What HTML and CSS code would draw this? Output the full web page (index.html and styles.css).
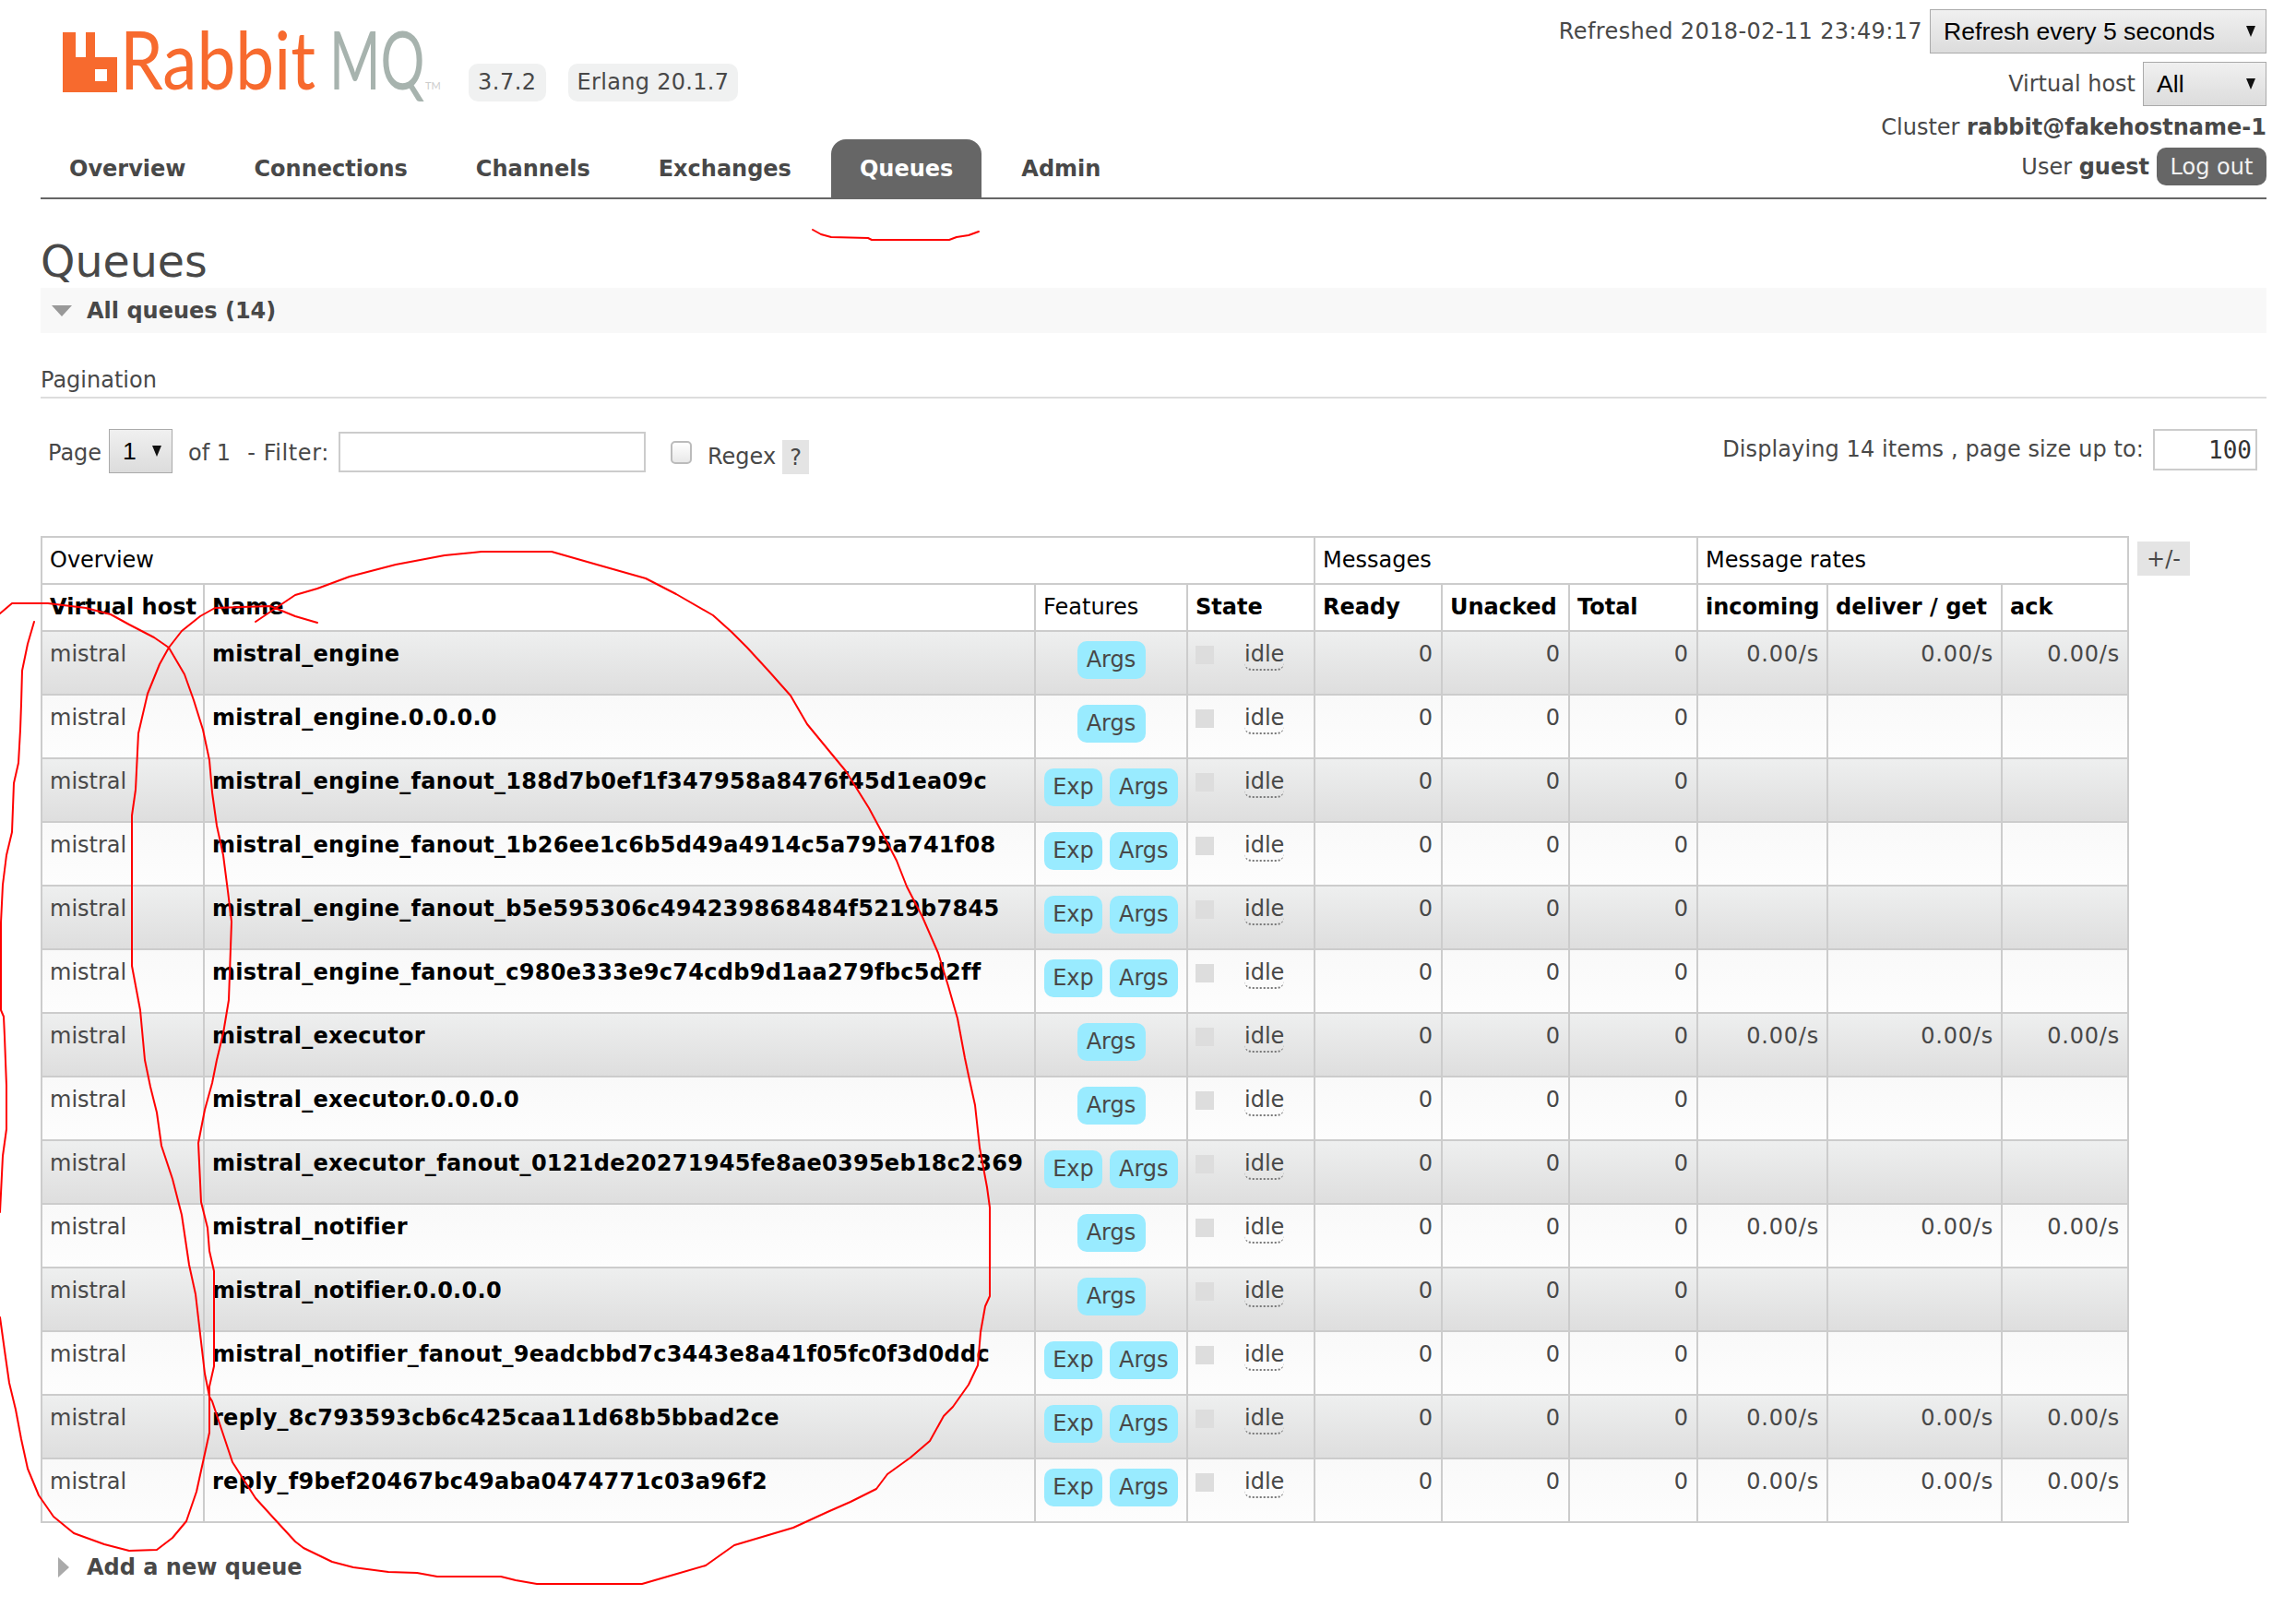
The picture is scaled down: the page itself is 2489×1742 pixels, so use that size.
FILE: index.html
```html
<!DOCTYPE html>
<html lang="en">
<head>
<meta charset="utf-8">
<title>RabbitMQ Management</title>
<link rel="stylesheet" href="styles.css">
</head>
<body>
<div class="page">
  <header class="header">
    <div class="header-left">
      <div class="brand">
        <svg class="logo" viewBox="0 0 420 75" width="420" height="75" aria-label="RabbitMQ">
          <path d="M0 5H14V32H25V5H35V32H59V70H0ZM35 45V58H48V45Z" fill="#f76a2e" fill-rule="evenodd"/>
          <text class="logo-word logo-orange" transform="translate(62 67) scale(.85 1)">Rabbit</text>
          <text class="logo-word logo-grey" transform="translate(289 67) scale(.68 1)">MQ</text>
          <text class="logo-tm" x="393" y="67">TM</text>
        </svg>
        <span class="version version-a">3.7.2</span>
        <span class="version version-b">Erlang 20.1.7</span>
      </div>
      <nav class="nav">
        <a class="tab">Overview</a>
        <a class="tab">Connections</a>
        <a class="tab">Channels</a>
        <a class="tab">Exchanges</a>
        <a class="tab tab-active">Queues</a>
        <a class="tab">Admin</a>
      </nav>
    </div>
    <div class="header-right">
      <div class="meta-row meta-refresh"><span class="digits">Refreshed 2018-02-11 23:49:17</span>
        <span class="select-wrap"><select class="select select-refresh"><option>Refresh every 5 seconds</option></select></span>
      </div>
      <div class="meta-row meta-vhost">Virtual host
        <span class="select-wrap"><select class="select select-vhost"><option>All</option></select></span>
      </div>
      <div class="meta-row meta-cluster"><span>Cluster <b class="strong">rabbit@fakehostname-1</b></span></div>
      <div class="meta-row meta-user"><span>User <b class="strong">guest</b></span> <button class="logout">Log out</button></div>
    </div>
  </header>

  <h1 class="title">Queues</h1>
  <div class="section-head"><span class="tri-down"></span>All queues (14)</div>

  <h3 class="pagination-label">Pagination</h3>
  <div class="filter-row">
    <div class="filter-left">
      <span class="lbl-page">Page</span>
      <span class="select-wrap"><select class="select select-page"><option>1</option></select></span>
      <span class="lbl-of">of 1</span>
      <span class="lbl-filter">- Filter:</span>
      <input class="input-filter" type="text">
      <input class="check" type="checkbox">
      <span class="lbl-regex">Regex</span>
      <span class="help">?</span>
    </div>
    <div class="filter-right">
      <span class="lbl-display">Displaying 14 items , page size up to:</span>
      <input class="input-size" type="text" value="100">
    </div>
  </div>

  <div class="table-row">
    <table class="queues">
      <colgroup>
        <col class="c-vhost"><col class="c-name"><col class="c-feat"><col class="c-state">
        <col class="c-msg"><col class="c-msg"><col class="c-total">
        <col class="c-in"><col class="c-del"><col class="c-ack">
      </colgroup>
      <thead>
        <tr class="head-a">
          <th colspan="4">Overview</th>
          <th colspan="3">Messages</th>
          <th colspan="3">Message rates</th>
        </tr>
        <tr class="head-b">
          <th class="b">Virtual host</th>
          <th class="b">Name</th>
          <th>Features</th>
          <th class="b">State</th>
          <th class="b">Ready</th>
          <th class="b">Unacked</th>
          <th class="b">Total</th>
          <th class="b">incoming</th>
          <th class="b">deliver / get</th>
          <th class="b">ack</th>
        </tr>
      </thead>
      <tbody>
        <tr class="alt1"><td>mistral</td><td class="qname">mistral_engine</td><td class="feat"><span class="tag">Args</span></td><td><span class="status"></span><span class="idle">idle</span></td><td class="num">0</td><td class="num">0</td><td class="num">0</td><td class="num rate">0.00/s</td><td class="num rate">0.00/s</td><td class="num rate">0.00/s</td></tr>
        <tr class="alt2"><td>mistral</td><td class="qname">mistral_engine.0.0.0.0</td><td class="feat"><span class="tag">Args</span></td><td><span class="status"></span><span class="idle">idle</span></td><td class="num">0</td><td class="num">0</td><td class="num">0</td><td></td><td></td><td></td></tr>
        <tr class="alt1"><td>mistral</td><td class="qname">mistral_engine_fanout_188d7b0ef1f347958a8476f45d1ea09c</td><td class="feat"><span class="tag">Exp</span><span class="tag">Args</span></td><td><span class="status"></span><span class="idle">idle</span></td><td class="num">0</td><td class="num">0</td><td class="num">0</td><td></td><td></td><td></td></tr>
        <tr class="alt2"><td>mistral</td><td class="qname">mistral_engine_fanout_1b26ee1c6b5d49a4914c5a795a741f08</td><td class="feat"><span class="tag">Exp</span><span class="tag">Args</span></td><td><span class="status"></span><span class="idle">idle</span></td><td class="num">0</td><td class="num">0</td><td class="num">0</td><td></td><td></td><td></td></tr>
        <tr class="alt1"><td>mistral</td><td class="qname">mistral_engine_fanout_b5e595306c494239868484f5219b7845</td><td class="feat"><span class="tag">Exp</span><span class="tag">Args</span></td><td><span class="status"></span><span class="idle">idle</span></td><td class="num">0</td><td class="num">0</td><td class="num">0</td><td></td><td></td><td></td></tr>
        <tr class="alt2"><td>mistral</td><td class="qname">mistral_engine_fanout_c980e333e9c74cdb9d1aa279fbc5d2ff</td><td class="feat"><span class="tag">Exp</span><span class="tag">Args</span></td><td><span class="status"></span><span class="idle">idle</span></td><td class="num">0</td><td class="num">0</td><td class="num">0</td><td></td><td></td><td></td></tr>
        <tr class="alt1"><td>mistral</td><td class="qname">mistral_executor</td><td class="feat"><span class="tag">Args</span></td><td><span class="status"></span><span class="idle">idle</span></td><td class="num">0</td><td class="num">0</td><td class="num">0</td><td class="num rate">0.00/s</td><td class="num rate">0.00/s</td><td class="num rate">0.00/s</td></tr>
        <tr class="alt2"><td>mistral</td><td class="qname">mistral_executor.0.0.0.0</td><td class="feat"><span class="tag">Args</span></td><td><span class="status"></span><span class="idle">idle</span></td><td class="num">0</td><td class="num">0</td><td class="num">0</td><td></td><td></td><td></td></tr>
        <tr class="alt1"><td>mistral</td><td class="qname">mistral_executor_fanout_0121de20271945fe8ae0395eb18c2369</td><td class="feat"><span class="tag">Exp</span><span class="tag">Args</span></td><td><span class="status"></span><span class="idle">idle</span></td><td class="num">0</td><td class="num">0</td><td class="num">0</td><td></td><td></td><td></td></tr>
        <tr class="alt2"><td>mistral</td><td class="qname">mistral_notifier</td><td class="feat"><span class="tag">Args</span></td><td><span class="status"></span><span class="idle">idle</span></td><td class="num">0</td><td class="num">0</td><td class="num">0</td><td class="num rate">0.00/s</td><td class="num rate">0.00/s</td><td class="num rate">0.00/s</td></tr>
        <tr class="alt1"><td>mistral</td><td class="qname">mistral_notifier.0.0.0.0</td><td class="feat"><span class="tag">Args</span></td><td><span class="status"></span><span class="idle">idle</span></td><td class="num">0</td><td class="num">0</td><td class="num">0</td><td></td><td></td><td></td></tr>
        <tr class="alt2"><td>mistral</td><td class="qname">mistral_notifier_fanout_9eadcbbd7c3443e8a41f05fc0f3d0ddc</td><td class="feat"><span class="tag">Exp</span><span class="tag">Args</span></td><td><span class="status"></span><span class="idle">idle</span></td><td class="num">0</td><td class="num">0</td><td class="num">0</td><td></td><td></td><td></td></tr>
        <tr class="alt1"><td>mistral</td><td class="qname">reply_8c793593cb6c425caa11d68b5bbad2ce</td><td class="feat"><span class="tag">Exp</span><span class="tag">Args</span></td><td><span class="status"></span><span class="idle">idle</span></td><td class="num">0</td><td class="num">0</td><td class="num">0</td><td class="num rate">0.00/s</td><td class="num rate">0.00/s</td><td class="num rate">0.00/s</td></tr>
        <tr class="alt2"><td>mistral</td><td class="qname">reply_f9bef20467bc49aba0474771c03a96f2</td><td class="feat"><span class="tag">Exp</span><span class="tag">Args</span></td><td><span class="status"></span><span class="idle">idle</span></td><td class="num">0</td><td class="num">0</td><td class="num">0</td><td class="num rate">0.00/s</td><td class="num rate">0.00/s</td><td class="num rate">0.00/s</td></tr>
      </tbody>
    </table>
    <span class="toggle">+/-</span>
  </div>

  <div class="section-foot"><span class="tri-right"></span>Add a new queue</div>
</div>

<svg class="ink" viewBox="0 0 2489 1742" width="2489" height="1742" aria-hidden="true">
  <polyline points="881,249 890,254 901,257 941,258 945,260 973,260 1029,260 1037,257 1050,255 1061,251"/>
  <polyline points="37,674 30,698 24,727 23,763 22,791 20,827 15,849 13,902 7,927 3,959 1,1000 1,1095 4,1102 5,1124 7,1177 7,1224 3,1253 0,1314"/>
  <polyline points="0,1428 5,1464 10,1499 17,1528 23,1560 30,1592 42,1621 58,1644 80,1662 113,1674 140,1681 170,1680 187,1667 202,1649 213,1617 220,1585 227,1553 227,1503 232,1481 232,1378 227,1356 225,1331 218,1303 215,1239 222,1203 230,1174 235,1149 242,1120 248,1084 251,999 247,966 242,927 235,895 230,859 227,824 220,791 210,759 200,731 183,702 167,691 140,677 120,666 93,659 52,654 13,654 0,665"/>
  <polyline points="277,674 320,645 344,638 379,625 429,612 482,602 522,598 598,598 647,612 700,627 733,644 773,667 793,685 810,702 833,727 857,754 875,785 898,813 917,836 942,876 957,904 972,933 983,961 1000,994 1017,1033 1028,1069 1038,1104 1046,1147 1050,1166 1057,1198 1062,1244 1070,1287 1073,1309 1073,1405 1068,1416 1063,1444 1060,1480 1050,1501 1033,1525 1023,1535 1008,1562 987,1580 962,1598 950,1614 922,1628 897,1639 860,1656 796,1675 765,1697 727,1708 696,1717 582,1717 559,1713 543,1709 474,1709 452,1705 421,1704 383,1699 360,1693 329,1678 320,1671 297,1646 277,1624 252,1585 240,1549 230,1519 227,1514 222,1489 217,1446 212,1403 205,1371 197,1317 187,1278 175,1242 170,1206 163,1178 157,1149 152,1095 143,1047 143,884 147,856 150,795 160,752 173,720 183,702 197,684 217,668 233,659 293,657 320,668 344,675"/>
</svg>
</body>
</html>
```

FILE: styles.css
```css
* { box-sizing: border-box; }
html, body { margin: 0; padding: 0; background: #fff; }
body {
  position: relative;
  width: 2489px;
  height: 1742px;
  overflow: hidden;
  font-family: "DejaVu Sans", Verdana, sans-serif;
  font-size: 24px;
  line-height: 30px;
  color: #484848;
}
.page { padding: 0 32px 0 44px; }

/* header */
.header {
  display: flex;
  justify-content: space-between;
  height: 216px;
  border-bottom: 2px solid #666;
}
.header-left { display: flex; flex-direction: column; justify-content: space-between; }
.brand { display: flex; align-items: flex-start; padding: 30px 0 0 24px; }
.logo { flex: none; margin-right: 20px; overflow: visible; }
.logo-word { font-family: Lato, sans-serif; font-weight: 400; font-size: 88px; }
.logo-orange { fill: #f76a2e; }
.logo-grey { fill: #a7b3ae; }
.logo-tm { font-family: Lato, sans-serif; font-size: 11px; fill: #ccc; }
.version {
  margin-top: 39px;
  height: 41px;
  line-height: 41px;
  padding: 0 10px;
  background: #f0f1f1;
  border-radius: 10px;
}
.version-a { letter-spacing: .5px; }
.version-b { margin-left: 24px; letter-spacing: .3px; }
.nav { display: flex; }
.tab {
  height: 63px;
  line-height: 65px;
  padding: 0 31px;
  margin-right: 12px;
  font-weight: bold;
  border-radius: 16px 16px 0 0;
  color: #484848;
}
.tab-active { background: #666; color: #fff; }
.header-right { display: flex; flex-direction: column; align-items: flex-end; padding-top: 10px; }
.meta-row { display: flex; align-items: center; gap: 8px; }
.digits { letter-spacing: .38px; }
.meta-vhost { margin-top: 9px; }
.meta-cluster { margin-top: 8px; height: 30px; }
.meta-user { margin-top: 7px; }
.strong { font-weight: bold; }
.logout {
  height: 41px;
  width: 119px;
  padding: 0;
  border: 0;
  border-radius: 10px;
  background: #666;
  color: #f2f2f2;
  font: 24px "DejaVu Sans", sans-serif;
}

/* selects */
.select-wrap { position: relative; display: inline-block; }
.select-wrap::after {
  content: "";
  position: absolute;
  right: 12px;
  top: 18px;
  border-left: 5px solid transparent;
  border-right: 5px solid transparent;
  border-top: 12px solid #111;
  pointer-events: none;
}
.select {
  display: block;
  appearance: none;
  -webkit-appearance: none;
  height: 48px;
  padding: 0 14px;
  border: 1px solid #aaa;
  border-radius: 0;
  background: linear-gradient(#f0f0f0, #dcdcdc);
  font: 26.6px "Liberation Sans", Arial, sans-serif;
  color: #000;
}
.select-refresh { width: 365px; }
.select-vhost { width: 134px; }
.select-page { width: 69px; }

/* title */
.title {
  margin: 0;
  height: 96px;
  padding-top: 38px;
  font-size: 47.5px;
  line-height: 60px;
  font-weight: normal;
  color: #484848;
}
.section-head {
  display: flex;
  align-items: center;
  height: 49px;
  background: #f8f8f8;
  font-weight: bold;
  padding-left: 12px;
}
.tri-down {
  width: 0; height: 0;
  margin-right: 16px;
  border-left: 11px solid transparent;
  border-right: 11px solid transparent;
  border-top: 12px solid #999;
}
.pagination-label {
  margin: 36px 0 0;
  height: 35px;
  font-size: 24px;
  font-weight: normal;
  line-height: 30px;
  border-bottom: 2px solid #ddd;
}

/* filter row */
.filter-row {
  display: flex;
  justify-content: space-between;
  height: 149px;
  padding-top: 33px;
}
.filter-left { display: flex; align-items: flex-start; padding-left: 8px; }
.filter-right { display: flex; align-items: flex-start; gap: 10px; padding-right: 10px; line-height: 45px; }
.lbl-display { letter-spacing: .1px; }
.lbl-page { margin-top: 2px; margin-right: 8px; line-height: 48px; }
.lbl-of { margin-left: 17px; line-height: 48px; margin-top: 2px; }
.lbl-filter { margin-left: 18px; margin-right: 10px; letter-spacing: .6px; line-height: 48px; margin-top: 2px; }
.input-filter {
  width: 333px;
  height: 44px;
  margin-top: 3px;
  border: 2px solid #ccc;
  background: #fff;
}
.check {
  appearance: none;
  -webkit-appearance: none;
  width: 23px;
  height: 25px;
  margin: 13px 17px 0 27px;
  border: 2px solid #bbb;
  border-radius: 5px;
  background: linear-gradient(#fff, #e8e8e8);
}
.lbl-regex { margin-top: 6px; line-height: 48px; }
.help {
  width: 29px;
  height: 37px;
  margin: 12px 0 0 7px;
  line-height: 39px;
  text-align: center;
  background: #e4e4e4;
}
.input-size {
  width: 113px;
  height: 45px;
  padding: 0 4px;
  border: 2px solid #ccc;
  text-align: right;
  font: 26px "DejaVu Sans Mono", monospace;
  color: #333;
}

/* table */
.table-row { display: flex; align-items: flex-start; gap: 9px; }
.queues {
  width: 2264px;
  table-layout: fixed;
  border-collapse: collapse;
  flex: none;
}
.c-vhost { width: 176px; }
.c-name { width: 901px; }
.c-feat { width: 165px; }
.c-state { width: 138px; }
.c-msg { width: 138px; }
.c-total { width: 139px; }
.c-in { width: 141px; }
.c-del { width: 189px; }
.c-ack { width: 137px; }
.queues th, .queues td { border: 2px solid #ccc; padding: 0 9px 0 8px; vertical-align: top; text-align: left; white-space: nowrap; }
.queues th { background: #fff; color: #000; font-weight: normal; height: 51px; padding-top: 9px; }
.queues th.b { font-weight: bold; }
.queues td { height: 69px; padding-top: 9px; }
.alt1 td { background: linear-gradient(#eeefef, #dedede); }
.alt2 td { background: linear-gradient(#f9f9f9, #fdfdfd); }
.queues td.qname { font-weight: bold; color: #000; letter-spacing: .28px; }
.queues td.num { text-align: right; }
.queues td.rate { letter-spacing: .8px; padding-right: 8px; }
.queues td.feat { text-align: center; padding: 10px 0 0; white-space: nowrap; }
.tag {
  display: inline-block;
  height: 41px;
  line-height: 41px;
  padding: 0 9px;
  margin: 0 4px;
  background: #99ebff;
  border-radius: 10px;
  text-align: center;
}
.tag:last-child { min-width: 74px; }
.status {
  display: inline-block;
  width: 20px;
  height: 20px;
  margin-top: 6px;
  vertical-align: top;
  background: #ddd;
}
.idle {
  display: inline-block;
  margin-left: 33px;
  line-height: 30px;
  height: 33px;
  border-bottom: 2px dotted #777;
  border-radius: 0 0 8px 8px;
}
.toggle {
  width: 57px;
  height: 37px;
  margin-top: 6px;
  line-height: 39px;
  text-align: center;
  background: #e4e4e4;
}

/* footer */
.section-foot {
  display: flex;
  align-items: center;
  height: 40px;
  margin-top: 28px;
  padding-left: 19px;
  font-weight: bold;
}
.tri-right {
  width: 0; height: 0;
  margin-right: 19px;
  border-top: 11px solid transparent;
  border-bottom: 11px solid transparent;
  border-left: 12px solid #aaa;
}

/* hand-drawn annotations over the page */
.ink { position: absolute; left: 0; top: 0; pointer-events: none; }
.ink polyline { fill: none; stroke: #f00; stroke-width: 2; stroke-linejoin: round; stroke-linecap: round; }
```
